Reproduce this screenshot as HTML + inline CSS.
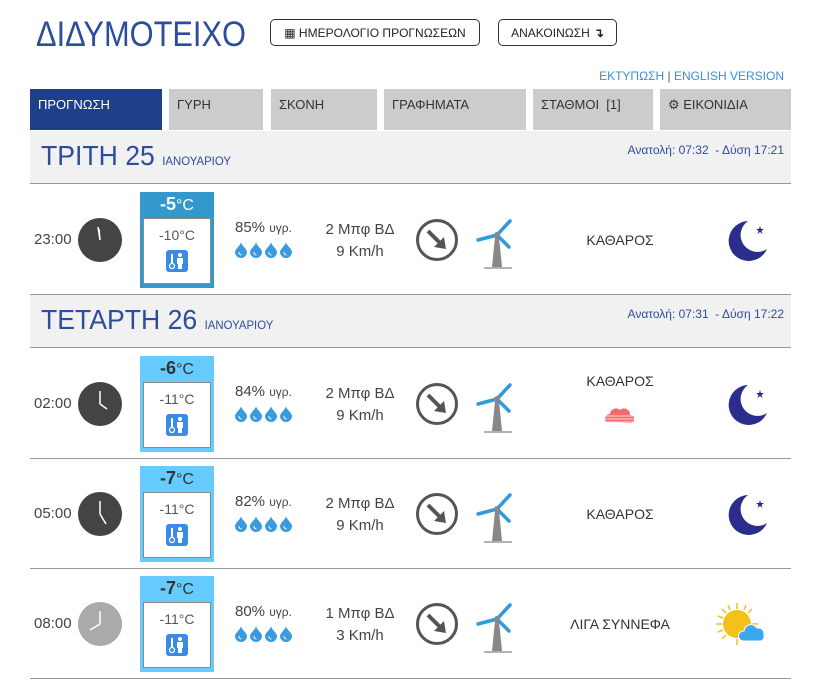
<!DOCTYPE html><html><head><meta charset="utf-8"><style>
body{margin:0;background:#fff;font-family:"Liberation Sans",sans-serif;color:#444;width:813px;height:683px;overflow:hidden;position:relative}
.a{position:absolute}
.title{left:36px;top:15px;font-size:35px;color:#2d4c9c;transform:scaleX(.88);transform-origin:left}
.btn{border:1.5px solid #333;border-radius:5px;height:25px;top:19px;font-size:12px;color:#222;display:flex;align-items:center;justify-content:center}
.tab{top:89px;height:41px;background:#ccc;font-size:13px;color:#333;padding:8px 0 0 8px;box-sizing:border-box}
.dh{left:30px;width:761px;height:53px;background:#f1f1f1;border-bottom:1.5px solid #999;box-sizing:border-box}
.dh .d{position:absolute;left:11px;top:9px;font-size:28px;color:#2d4c9c;transform:scaleX(.95);transform-origin:left}
.dh .d small{font-size:12px}
.dh .s{position:absolute;right:7px;top:12px;font-size:12px;color:#2d4c9c}
.row{left:30px;width:761px;height:110px;border-bottom:1.5px solid #999;box-sizing:border-box}
.row>*{position:absolute}
.tm{left:4px;top:46px;font-size:15px;color:#444}
.clk{left:48px;top:33px;width:44px;height:44px}
.tb{left:110px;top:7px;width:74px;height:96px}
.tb .h{height:24px;text-align:center;font-size:16px;color:#fff;line-height:24px}
.tb .h b{font-size:18px}
.tb .in{position:absolute;left:3px;top:26px;width:66px;height:64px;background:#fff;border:1px solid #888;text-align:center;font-size:14px;color:#555}
.hm{left:205px;top:34px;font-size:15px;width:70px}
.hm small{font-size:12px}
.wd{left:285px;top:34px;width:90px;text-align:center;font-size:15px;line-height:22px}
.cd{left:520px;width:140px;text-align:center;font-size:14px;color:#333}
</style></head><body>
<div class="a title">ΔΙΔΥΜΟΤΕΙΧΟ</div>
<div class="a btn" style="left:270px;width:208px">&#9638; ΗΜΕΡΟΛΟΓΙΟ ΠΡΟΓΝΩΣΕΩΝ</div>
<div class="a btn" style="left:498px;width:117px">ΑΝΑΚΟΙΝΩΣΗ <b style="margin-left:4px">↴</b></div>
<div class="a" style="right:29px;top:69px;font-size:12px;color:#3a8fd6">ΕΚΤΥΠΩΣΗ <span style="color:#555">|</span> ENGLISH VERSION</div>
<div class="a tab" style="left:30px;width:132px;background:#1f3f8a;color:#fff">ΠΡΟΓΝΩΣΗ</div>
<div class="a tab" style="left:169px;width:94px">ΓΥΡΗ</div>
<div class="a tab" style="left:271px;width:106px">ΣΚΟΝΗ</div>
<div class="a tab" style="left:384px;width:142px">ΓΡΑΦΗΜΑΤΑ</div>
<div class="a tab" style="left:533px;width:120px">ΣΤΑΘΜΟΙ&nbsp; [1]</div>
<div class="a tab" style="left:660px;width:131px">⚙ ΕΙΚΟΝΙΔΙΑ</div>

<div class="a dh" style="top:131px"><div class="d">ΤΡΙΤΗ 25 <small>ΙΑΝΟΥΑΡΙΟΥ</small></div><div class="s">Ανατολή: 07:32 &nbsp;- Δύση 17:21</div></div>
<div class="a dh" style="top:295px"><div class="d">ΤΕΤΑΡΤΗ 26 <small>ΙΑΝΟΥΑΡΙΟΥ</small></div><div class="s">Ανατολή: 07:31 &nbsp;- Δύση 17:22</div></div>

<svg width="0" height="0" style="position:absolute"><defs>
<g id="arr"><circle cx="22" cy="22" r="19.5" fill="none" stroke="#555" stroke-width="3"/><path d="M13 13L27 27" stroke="#555" stroke-width="4"/><path d="M31 31L19 29L29 19Z" fill="#555"/></g>
<g id="tur"><path d="M19 22L23 22L26 52L16 52Z" fill="#888"/><path d="M8 53L36 53" stroke="#999" stroke-width="1.5"/><path d="M21 20L34 6M21 20L2 25M21 20L33 32" stroke="#3399dd" stroke-width="3.5" stroke-linecap="round"/><circle cx="21" cy="20" r="3" fill="#888"/></g>
<g id="moon"><path d="M21 4A20 20 0 1 0 40 32A16 16 0 0 1 21 4Z" fill="#2b2d8c"/><path d="M33 9L34 12L37 12L34.5 14L35.5 17L33 15L30.5 17L31.5 14L29 12L32 12Z" fill="#2b2d8c"/></g>
<g id="drop"><path d="M6 0C6 3 0 7 0 10A6 6 0 0 0 12 10C12 7 6 3 6 0Z" fill="#3a9ae0"/><path d="M4 10A2.5 2.5 0 0 0 6.5 13" stroke="#fff" stroke-width="1" fill="none"/></g>
<g id="ico"><rect width="22" height="22" rx="3" fill="#3a8be8"/><path d="M6 4V14" stroke="#fff" stroke-width="2"/><circle cx="6" cy="16" r="2.5" fill="none" stroke="#fff" stroke-width="1.3"/><circle cx="14" cy="5" r="2" fill="#fff"/><path d="M11 8H17V14H16V19H12V14H11Z" fill="#fff"/></g>
<g id="drops"><use href="#drop" x="0" y="1"/><use href="#drop" x="15" y="1"/><use href="#drop" x="30" y="1"/><use href="#drop" x="45" y="1"/></g>
</defs></svg>

<div class="a row" style="top:185px">
<div class="tm">23:00</div>
<svg class="clk" width="44" height="44"><circle cx="22" cy="22" r="22" fill="#444"/><path d="M22 22L20 9M22 22L21 11" stroke="#fff" stroke-width="1.5"/></svg>
<div class="tb" style="background:#3399cc"><div class="h"><b>-5</b>°C</div><div class="in"><div style="margin-top:8px">-10°C</div><svg class="a" style="left:22px;top:31px" width="22" height="22"><use href="#ico"/></svg></div></div>
<div class="hm">85% <small>υγρ.</small><svg style="display:block;margin-top:5px" width="62" height="17"><use href="#drops"/></svg></div>
<div class="wd">2 Μπφ ΒΔ<br>9 Km/h</div>
<svg style="left:385px;top:33px" width="44" height="44"><use href="#arr"/></svg>
<svg style="left:446px;top:30px" width="44" height="56"><use href="#tur"/></svg>
<div class="cd" style="top:47px">ΚΑΘΑΡΟΣ</div>
<svg style="left:697px;top:32px" width="44" height="44"><use href="#moon"/></svg>
</div>

<div class="a row" style="top:349px">
<div class="tm">02:00</div>
<svg class="clk" width="44" height="44"><circle cx="22" cy="22" r="22" fill="#444"/><path d="M22 22L22 9M22 22L29 27" stroke="#fff" stroke-width="1.5"/></svg>
<div class="tb" style="background:#66ccff"><div class="h" style="color:#333"><b>-6</b>°C</div><div class="in"><div style="margin-top:8px">-11°C</div><svg class="a" style="left:22px;top:31px" width="22" height="22"><use href="#ico"/></svg></div></div>
<div class="hm">84% <small>υγρ.</small><svg style="display:block;margin-top:5px" width="62" height="17"><use href="#drops"/></svg></div>
<div class="wd">2 Μπφ ΒΔ<br>9 Km/h</div>
<svg style="left:385px;top:33px" width="44" height="44"><use href="#arr"/></svg>
<svg style="left:446px;top:30px" width="44" height="56"><use href="#tur"/></svg>
<div class="cd" style="top:24px">ΚΑΘΑΡΟΣ</div>
<svg style="left:574px;top:56px" width="30" height="20"><path d="M2 17A5 5 0 0 1 6 9A6 6 0 0 1 16 5A6 6 0 0 1 26 10A4 4 0 0 1 27 18Z" fill="#f56a6a"/><path d="M0 11H30M0 14H30M0 17H30" stroke="#fff" stroke-width=".8"/></svg>
<svg style="left:697px;top:32px" width="44" height="44"><use href="#moon"/></svg>
</div>

<div class="a row" style="top:459px">
<div class="tm">05:00</div>
<svg class="clk" width="44" height="44"><circle cx="22" cy="22" r="22" fill="#444"/><path d="M22 22L22 9M22 22L28 32" stroke="#fff" stroke-width="1.5"/></svg>
<div class="tb" style="background:#66ccff"><div class="h" style="color:#333"><b>-7</b>°C</div><div class="in"><div style="margin-top:8px">-11°C</div><svg class="a" style="left:22px;top:31px" width="22" height="22"><use href="#ico"/></svg></div></div>
<div class="hm">82% <small>υγρ.</small><svg style="display:block;margin-top:5px" width="62" height="17"><use href="#drops"/></svg></div>
<div class="wd">2 Μπφ ΒΔ<br>9 Km/h</div>
<svg style="left:385px;top:33px" width="44" height="44"><use href="#arr"/></svg>
<svg style="left:446px;top:30px" width="44" height="56"><use href="#tur"/></svg>
<div class="cd" style="top:47px">ΚΑΘΑΡΟΣ</div>
<svg style="left:697px;top:32px" width="44" height="44"><use href="#moon"/></svg>
</div>

<div class="a row" style="top:569px">
<div class="tm">08:00</div>
<svg class="clk" width="44" height="44"><circle cx="22" cy="22" r="22" fill="#aaa"/><path d="M22 22L22 9M22 22L12 28" stroke="#fff" stroke-width="1.5"/></svg>
<div class="tb" style="background:#66ccff"><div class="h" style="color:#333"><b>-7</b>°C</div><div class="in"><div style="margin-top:8px">-11°C</div><svg class="a" style="left:22px;top:31px" width="22" height="22"><use href="#ico"/></svg></div></div>
<div class="hm">80% <small>υγρ.</small><svg style="display:block;margin-top:5px" width="62" height="17"><use href="#drops"/></svg></div>
<div class="wd">1 Μπφ ΒΔ<br>3 Km/h</div>
<svg style="left:385px;top:33px" width="44" height="44"><use href="#arr"/></svg>
<svg style="left:446px;top:30px" width="44" height="56"><use href="#tur"/></svg>
<div class="cd" style="top:47px">ΛΙΓΑ ΣΥΝΝΕΦΑ</div>
<svg style="left:684px;top:30px" width="60" height="50"><g stroke="#f2c21a" stroke-width="1.5"><path d="M23 4V10M23 40V46M2 25H8M38 25H44M8 10L12 14M38 10L34 14M8 40L12 36M14 6L16 11M32 6L30 11M4 17L9 19M4 33L9 31"/></g><circle cx="23" cy="25" r="14" fill="#f2c21a"/><path d="M29 42A5 5 0 0 1 30 32A7 7 0 0 1 43 29A6 6 0 0 1 50 36A5 5 0 0 1 47 42Z" fill="#3aa8f0" stroke="#fff" stroke-width="1"/></svg>
</div>
</body></html>
